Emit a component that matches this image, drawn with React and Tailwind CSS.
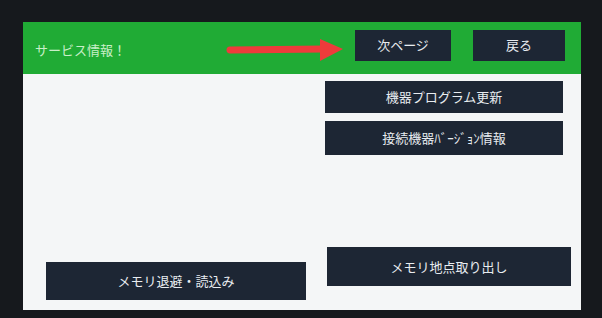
import React from 'react';

const font = { fontFamily: '"Noto Sans CJK JP", "Noto Sans", sans-serif' };

// dark navy panel button used on the service screen
const PanelButton = ({ label, className = '' }) => (
  <div className={`flex items-center justify-center bg-[#1d2634] text-[#e8ecf0] text-[13px] ${className}`}>
    {label}
  </div>
);

const RedArrow = () => (
  <svg className="absolute left-[203px] top-[16px]" width="120" height="24" viewBox="0 0 120 24">
    <path d="M4 12 L98 11" stroke="#ee3b3b" strokeWidth="7" strokeLinecap="round" fill="none" />
    <path d="M94 1 L117 11 L94 23 Z" fill="#ee3b3b" />
  </svg>
);

export default function App() {
  return (
    <div className="w-[602px] h-[318px] bg-[#16191d] pt-[22px] pl-[23px] overflow-hidden" style={font}>
      <div className="w-[558px] h-[288px] flex flex-col bg-[#f4f6f7]">
        <div className="relative h-[52px] bg-[#20ab35] flex items-center pl-[12px] pr-[16px]">
          <span className="text-[13px] text-[#c9efc9] mt-[4px]">サービス情報！</span>
          <RedArrow />
          <div className="ml-auto flex items-center gap-[22px] -mt-[6px]">
            <PanelButton label="次ページ" className="w-[96px] h-[31px]" />
            <PanelButton label="戻る" className="w-[92px] h-[31px]" />
          </div>
        </div>
        <div className="flex-1 flex flex-col pt-[7px] pb-[10px] pl-[23px] pr-[10px]">
          <div className="self-end flex flex-col gap-[8px] mr-[8px]">
            <PanelButton label="機器プログラム更新" className="w-[238px] h-[32px]" />
            <PanelButton label="接続機器ﾊﾞｰｼﾞｮﾝ情報" className="w-[238px] h-[34px]" />
          </div>
          <div className="mt-auto flex items-end justify-between">
            <PanelButton label="メモリ退避・読込み" className="w-[260px] h-[38px]" />
            <PanelButton label="メモリ地点取り出し" className="w-[244px] h-[39px] mb-[14px]" />
          </div>
        </div>
      </div>
    </div>
  );
}
